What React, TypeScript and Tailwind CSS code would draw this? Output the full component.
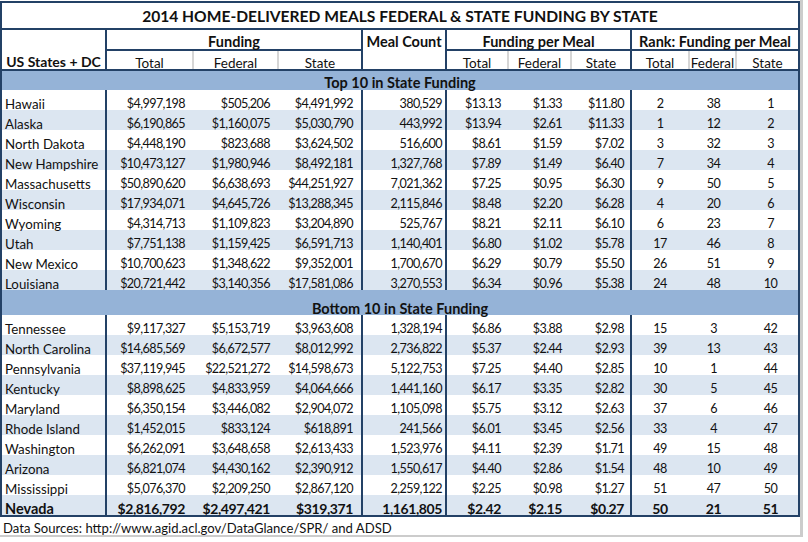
import React from "react";

const W = [
  "w-[105px]",
  "w-[85px]",
  "w-[85px]",
  "w-[86px]",
  "w-[84px]",
  "w-[60px]",
  "w-[63px]",
  "w-[62px]",
  "w-[56px]",
  "w-[47px]",
  "w-[63px]",
];
const BR = [true, false, false, true, true, false, false, true, false, false, false];
const AL = [
  "justify-start pl-[3px]",
  "justify-end pr-[7px]",
  "justify-end pr-[7px]",
  "justify-end pr-[8px]",
  "justify-end pr-[3px]",
  "justify-end pr-[6px]",
  "justify-end pr-[8px]",
  "justify-end pr-[6px]",
  "justify-center",
  "justify-center pl-[4px]",
  "justify-center pl-[8px]",
];

const top: string[][] = [
  ["Hawaii", "$4,997,198", "$505,206", "$4,491,992", "380,529", "$13.13", "$1.33", "$11.80", "2", "38", "1"],
  ["Alaska", "$6,190,865", "$1,160,075", "$5,030,790", "443,992", "$13.94", "$2.61", "$11.33", "1", "12", "2"],
  ["North Dakota", "$4,448,190", "$823,688", "$3,624,502", "516,600", "$8.61", "$1.59", "$7.02", "3", "32", "3"],
  ["New Hampshire", "$10,473,127", "$1,980,946", "$8,492,181", "1,327,768", "$7.89", "$1.49", "$6.40", "7", "34", "4"],
  ["Massachusetts", "$50,890,620", "$6,638,693", "$44,251,927", "7,021,362", "$7.25", "$0.95", "$6.30", "9", "50", "5"],
  ["Wisconsin", "$17,934,071", "$4,645,726", "$13,288,345", "2,115,846", "$8.48", "$2.20", "$6.28", "4", "20", "6"],
  ["Wyoming", "$4,314,713", "$1,109,823", "$3,204,890", "525,767", "$8.21", "$2.11", "$6.10", "6", "23", "7"],
  ["Utah", "$7,751,138", "$1,159,425", "$6,591,713", "1,140,401", "$6.80", "$1.02", "$5.78", "17", "46", "8"],
  ["New Mexico", "$10,700,623", "$1,348,622", "$9,352,001", "1,700,670", "$6.29", "$0.79", "$5.50", "26", "51", "9"],
  ["Louisiana", "$20,721,442", "$3,140,356", "$17,581,086", "3,270,553", "$6.34", "$0.96", "$5.38", "24", "48", "10"],
];

const bottom: string[][] = [
  ["Tennessee", "$9,117,327", "$5,153,719", "$3,963,608", "1,328,194", "$6.86", "$3.88", "$2.98", "15", "3", "42"],
  ["North Carolina", "$14,685,569", "$6,672,577", "$8,012,992", "2,736,822", "$5.37", "$2.44", "$2.93", "39", "13", "43"],
  ["Pennsylvania", "$37,119,945", "$22,521,272", "$14,598,673", "5,122,753", "$7.25", "$4.40", "$2.85", "10", "1", "44"],
  ["Kentucky", "$8,898,625", "$4,833,959", "$4,064,666", "1,441,160", "$6.17", "$3.35", "$2.82", "30", "5", "45"],
  ["Maryland", "$6,350,154", "$3,446,082", "$2,904,072", "1,105,098", "$5.75", "$3.12", "$2.63", "37", "6", "46"],
  ["Rhode Island", "$1,452,015", "$833,124", "$618,891", "241,566", "$6.01", "$3.45", "$2.56", "33", "4", "47"],
  ["Washington", "$6,262,091", "$3,648,658", "$2,613,433", "1,523,976", "$4.11", "$2.39", "$1.71", "49", "15", "48"],
  ["Arizona", "$6,821,074", "$4,430,162", "$2,390,912", "1,550,617", "$4.40", "$2.86", "$1.54", "48", "10", "49"],
  ["Mississippi", "$5,076,370", "$2,209,250", "$2,867,120", "2,259,122", "$2.25", "$0.98", "$1.27", "51", "47", "50"],
  ["Nevada", "$2,816,792", "$2,497,421", "$319,371", "1,161,805", "$2.42", "$2.15", "$0.27", "50", "21", "51"],
];

function Row({ c, shade, bold }: { c: string[]; shade: boolean; bold?: boolean }) {
  return (
    <div className={`flex h-[20px] ${shade ? "bg-[#dce6f1]" : "bg-white"} ${bold ? "font-bold" : ""}`}>
      {c.map((v, i) => {
        const size =
          i === 0
            ? bold
              ? "text-[14.5px]"
              : "text-[13.3px]"
            : bold
              ? "text-[14px] tracking-[-0.4px]"
              : "text-[12.6px] tracking-[-0.6px]";
        return (
          <div
            key={i}
            className={`${W[i]} ${AL[i]} ${size} flex items-start whitespace-nowrap leading-[14px] pt-[7px] ${
              BR[i] ? "border-r-2 border-[#234166]" : ""
            }`}
          >
            {v}
          </div>
        );
      })}
    </div>
  );
}

function Sub({ w, label, divider }: { w: string; label: string; divider?: boolean }) {
  return (
    <div
      className={`${w} flex items-start justify-center leading-[14px] pt-[5px] text-[13.5px] whitespace-nowrap ${
        divider ? "border-l-2 border-[#d6d6d6]" : ""
      }`}
    >
      {label}
    </div>
  );
}

export default function App() {
  return (
    <div className="w-[808px] h-[542px] bg-white font-[Lato,sans-serif] text-[#111] text-[14.5px]">
      <div className="w-[803px] h-[537px] border-r-[3px] border-b-2 border-[#cccccc] pt-[1px]">
        <div className="w-[800px] border-2 border-[#234166]">
          <div className="h-[27px] flex items-center justify-center font-bold text-[15.6px] border-b-2 border-[#234166] pt-[2px]">
            2014 HOME-DELIVERED MEALS FEDERAL &amp; STATE FUNDING BY STATE
          </div>
          <div className="flex h-[41px] border-b-2 border-[#234166]">
            <div className="w-[105px] border-r-2 border-[#234166] flex items-start justify-center font-bold leading-[14px] pt-[25px] text-[14px] whitespace-nowrap">
              US States + DC
            </div>
            <div className="w-[256px] border-r-2 border-[#234166] flex flex-col">
              <div className="h-[21px] border-b-2 border-[#234166] flex items-start justify-center font-bold leading-[14px] pt-[5px]">
                Funding
              </div>
              <div className="flex h-[18px]">
                <Sub w="w-[85px]" label="Total" />
                <Sub w="w-[85px]" label="Federal" divider />
                <Sub w="w-[84px]" label="State" divider />
              </div>
            </div>
            <div className="w-[84px] border-r-2 border-[#234166] flex flex-col">
              <div className="h-[19px] flex items-start justify-center font-bold leading-[14px] pt-[5px] whitespace-nowrap">
                Meal Count
              </div>
            </div>
            <div className="w-[185px] border-r-2 border-[#234166] flex flex-col">
              <div className="h-[21px] border-b-2 border-[#234166] flex items-start justify-center font-bold leading-[14px] pt-[5px]">
                Funding per Meal
              </div>
              <div className="flex h-[18px]">
                <Sub w="w-[60px]" label="Total" />
                <Sub w="w-[63px]" label="Federal" divider />
                <Sub w="w-[60px]" label="State" divider />
              </div>
            </div>
            <div className="w-[166px] flex flex-col">
              <div className="h-[21px] border-b-2 border-[#234166] flex items-start justify-center font-bold leading-[14px] pt-[5px]">
                Rank: Funding per Meal
              </div>
              <div className="flex h-[18px]">
                <Sub w="w-[56px]" label="Total" />
                <Sub w="w-[47px]" label="Federal" divider />
                <Sub w="w-[63px]" label="State" divider />
              </div>
            </div>
          </div>
          <div className="h-[19px] bg-[#95b3d7] flex items-start justify-center font-bold leading-[14px] pt-[5px]">
            Top 10 in State Funding
          </div>
          {top.map((r, i) => (
            <Row key={r[0]} c={r} shade={i % 2 === 1} />
          ))}
          <div className="h-[25px] bg-[#95b3d7] flex items-start justify-center font-bold leading-[14px] pt-[12px]">
            Bottom 10 in State Funding
          </div>
          {bottom.map((r, i) => (
            <Row key={r[0]} c={r} shade={i % 2 === 1} bold={r[0] === "Nevada"} />
          ))}
        </div>
        <div className="h-[17px] pl-[3px] leading-[14px] pt-[4px] text-[13.1px] whitespace-nowrap">
          Data Sources: http://www.agid.acl.gov/DataGlance/SPR/ and ADSD
        </div>
      </div>
    </div>
  );
}
